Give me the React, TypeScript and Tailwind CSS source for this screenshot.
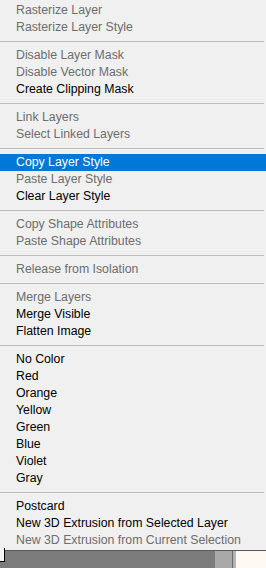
type Item = { label: string; disabled?: boolean; active?: boolean };

const groups: Item[][] = [
  [{ label: "Rasterize Layer", disabled: true }, { label: "Rasterize Layer Style", disabled: true }],
  [
    { label: "Disable Layer Mask", disabled: true },
    { label: "Disable Vector Mask", disabled: true },
    { label: "Create Clipping Mask" },
  ],
  [{ label: "Link Layers", disabled: true }, { label: "Select Linked Layers", disabled: true }],
  [
    { label: "Copy Layer Style", active: true },
    { label: "Paste Layer Style", disabled: true },
    { label: "Clear Layer Style" },
  ],
  [{ label: "Copy Shape Attributes", disabled: true }, { label: "Paste Shape Attributes", disabled: true }],
  [{ label: "Release from Isolation", disabled: true }],
  [{ label: "Merge Layers", disabled: true }, { label: "Merge Visible" }, { label: "Flatten Image" }],
  [
    { label: "No Color" },
    { label: "Red" },
    { label: "Orange" },
    { label: "Yellow" },
    { label: "Green" },
    { label: "Blue" },
    { label: "Violet" },
    { label: "Gray" },
  ],
  [
    { label: "Postcard" },
    { label: "New 3D Extrusion from Selected Layer" },
    { label: "New 3D Extrusion from Current Selection", disabled: true },
  ],
];

function MenuRow({ item }: { item: Item }) {
  const tone = item.active ? "bg-[#0078d7] text-white" : item.disabled ? "text-[#6d6d6d]" : "text-black";
  return (
    <div className={`flex h-[17px] items-center pl-4 pb-px text-[12.3px] leading-none whitespace-nowrap ${tone}`}>
      {item.label}
    </div>
  );
}

export default function App() {
  return (
    <div className="flex h-[568px] w-[266px] flex-col overflow-hidden bg-[#f0f0f0] font-['Liberation_Sans',Arial,sans-serif]">
      <div className="flex h-[550px] flex-col pt-[2px]">
        {groups.map((group, gi) => (
          <div key={gi}>
            {gi > 0 ? (
              <div className="flex h-[11px] items-center pr-[2px]">
                <div className="h-px w-full bg-[#bdbdbd]" />
              </div>
            ) : null}
            {group.map((item) => (
              <MenuRow key={item.label} item={item} />
            ))}
          </div>
        ))}
      </div>
      <div className="flex flex-1 border-t border-[#5a5a5a]">
        <div className="relative flex-1 bg-[#7b7b7b]">
          <div className="absolute -top-[3px] left-0 h-[14px] w-[5px] border-r border-b border-black bg-[#f5f5f5]" />
        </div>
        <div className="w-[17px] bg-[#a8a8a8]" />
        <div className="w-px bg-[#6a6a6a]" />
        <div className="w-[3px] bg-[#b5b5b5]" />
        <div className="w-[30px] bg-[#fdf8f0]" />
      </div>
    </div>
  );
}
